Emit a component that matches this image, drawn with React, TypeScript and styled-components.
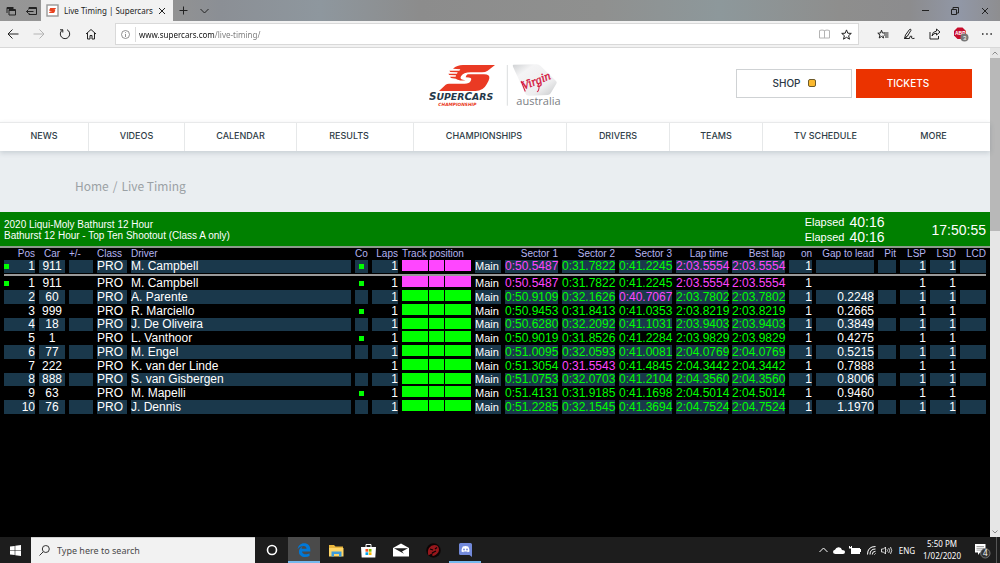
import React from "react";
import styled, { createGlobalStyle, css } from "styled-components";

const ui = `"Noto Sans", "Open Sans", sans-serif`;
const arial = `"Liberation Sans", Arial, sans-serif`;

const GlobalStyle = createGlobalStyle`
  * { box-sizing: border-box; }
  body { margin: 0; background: #000; font-family: ${ui}; }
  button { font: inherit; color: inherit; border: 0; padding: 0; background: none; }
  a { color: inherit; text-decoration: none; }
  svg { flex-shrink: 0; }
`;

const Screen = styled.div`
  display: flex;
  flex-direction: column;
  min-height: 100vh;
`;

/* ---------- browser chrome ---------- */

const TabStrip = styled.div`
  display: flex;
  align-items: stretch;
  height: 21px;
  color: #222;
  background: linear-gradient(90deg, #969696 0, #929292 17%, #8b8f95 22%, #8e979e 32%, #8c8c8c 42%, #8f908f 60%, #8d989b 72%, #8e8e8d 84%, #8c8c8e 91%, #9197a6 96%, #8e8e90 100%);
`;

const StripButton = styled.button<{ $w: number }>`
  display: flex;
  align-items: center;
  justify-content: center;
  width: ${(p) => p.$w}px;
`;

const Tab = styled.div`
  display: flex;
  align-items: center;
  width: 132px;
  padding: 0 6px 0 5px;
  background: #f2f2f2;
  font-size: 8px;
  white-space: nowrap;
`;

const TabTitle = styled.span`
  flex: 1;
  margin-left: 5px;
`;

const WindowButtons = styled.div`
  display: flex;
  margin-left: auto;
`;

const Toolbar = styled.div`
  display: flex;
  align-items: center;
  height: 27px;
  background: #f2f2f2;
  border-bottom: 1px solid #d8d8d8;
`;

const ToolButton = styled.button`
  position: relative;
  display: flex;
  align-items: center;
  justify-content: center;
  width: 26px;
  height: 24px;
  color: #222;

  &:disabled { color: #b4b4b4; }
`;

const AddressBar = styled.form`
  display: flex;
  align-items: center;
  flex: 1;
  height: 22px;
  margin: 0 11px;
  padding-right: 1px;
  background: #fff;
  border: 1px solid #d9d9d9;

  ${ToolButton} { width: 22px; }
`;

const InfoButton = styled.button`
  display: flex;
  justify-content: center;
  width: 20px;
  height: 15px;
  align-items: center;
  border-right: 1px solid #dcdcdc;
  color: #777;
`;

const AddressInput = styled.input`
  flex: 1;
  min-width: 0;
  height: 18px;
  margin-left: 3px;
  padding: 0;
  border: 0;
  outline: 0;
  font: 8px ${ui};
  color: transparent;
  background: linear-gradient(90deg, #111 76px, #777 76px);
  -webkit-background-clip: text;
  background-clip: text;
`;

/* ---------- page ---------- */

const Viewport = styled.div`
  display: flex;
  flex: 1;
`;

const Page = styled.div`
  display: flex;
  flex-direction: column;
  flex: 1;
  min-width: 0;
  background: #000;
`;

const Scrollbar = styled.div`
  display: flex;
  flex-direction: column;
  width: 10px;
  background: #e6e6e6;
  color: #8a8a8a;
`;

const ScrollArrow = styled.button`
  display: flex;
  align-items: center;
  justify-content: center;
  height: 10px;
`;

const ScrollThumb = styled.div`
  height: 173px;
  margin-bottom: auto;
  background: #b8b8b8;
`;

const SiteHeader = styled.header`
  display: grid;
  grid-template-columns: 1fr auto 1fr;
  align-items: center;
  height: 74px;
  padding: 0 18px;
  background: #fff;
`;

const LogoLink = styled.a`
  grid-column: 2;
  display: block;
  line-height: 0;
`;

const HeaderActions = styled.div`
  display: flex;
  justify-content: flex-end;
  gap: 4px;
  margin-bottom: 4px;
`;

const siteFont = `Inter, "Liberation Sans", sans-serif`;

const ActionLink = styled.a<{ $filled?: boolean }>`
  display: flex;
  align-items: center;
  justify-content: center;
  gap: 7px;
  width: 116px;
  height: 29px;
  padding-right: ${(p) => (p.$filled ? 12 : 0)}px;
  font: 500 10px ${siteFont};
  color: ${(p) => (p.$filled ? "#fff" : "#2b3945")};
  background: ${(p) => (p.$filled ? "#eb3300" : "#fff")};
  border: 1px solid ${(p) => (p.$filled ? "#eb3300" : "#cfd2d4")};
`;

const ShopBadge = styled.span`
  width: 8px;
  height: 8px;
  border: 1px solid #6d5a2a;
  border-radius: 2px;
  background: #fbb92f;
`;

const Nav = styled.nav`
  position: relative;
  display: grid;
  grid-template-columns: 89fr 96fr 112fr 117fr 153fr 103fr 93fr 126fr 101fr;
  height: 29px;
  background: #fff;
  border-top: 1px solid #e8e9ea;
  box-shadow: 0 2px 5px rgba(60, 80, 95, 0.2);
`;

const NavLink = styled.a<{ $menu?: boolean }>`
  display: flex;
  align-items: center;
  justify-content: center;
  padding-right: ${(p) => (p.$menu ? 12 : 0)}px;
  padding-bottom: 3px;
  font: 500 9px ${siteFont};
  color: #2f3d47;
  border-right: 1px solid #e6e8e9;

  &:last-child { border-right: 0; }
`;

const BreadcrumbBar = styled.div`
  display: flex;
  align-items: center;
  gap: 4px;
  height: 61px;
  padding: 7px 75px 0;
  background: #eaeef1;
  color: #9ba1a5;
  font: 12px "Noto Sans CJK SC", ${ui};
`;

/* ---------- timing screen ---------- */

const SessionBar = styled.section`
  display: flex;
  align-items: center;
  height: 36px;
  padding: 0 4px;
  color: #fff;
  background: #008000;
  border-bottom: 2px solid #8c9a8c;
  font-family: ${arial};
`;

const SessionTitle = styled.h1`
  flex: 1;
  margin: 0;
  padding-top: 2px;
  font-size: 10px;
  font-weight: 400;
  line-height: 11px;
`;

const Clocks = styled.dl`
  display: grid;
  grid-template-columns: auto auto;
  align-items: center;
  column-gap: 5px;
  margin: 0 47px 0 0;
  padding-top: 1px;
  line-height: 15px;

  dt { font-size: 11px; }
  dd { margin: 0; font-size: 14px; }
`;

const TimeOfDay = styled.time`
  padding-top: 1px;
  font-size: 14px;
`;

const TimingTable = styled.table`
  width: 100%;
  table-layout: fixed;
  border-collapse: separate;
  border-spacing: 4px 0;
  color: #fff;
  font: 12px/13px ${arial};
  white-space: nowrap;
`;

type Align = "left" | "right" | "center";

const HeadCell = styled.th<{ $align: Align }>`
  height: 12px;
  padding: 0;
  font-size: 10px;
  line-height: 12px;
  font-weight: 400;
  color: #b4b4f0;
  text-align: ${(p) => p.$align};
`;

const Cell = styled.td<{ $align: Align; $color?: string; $small?: boolean }>`
  padding: 0;
  text-align: ${(p) => p.$align};
  color: ${(p) => p.$color ?? "inherit"};
  ${(p) => p.$small && "font-size: 11px;"}
`;

const TrackCell = styled.td`
  padding: 0;
  vertical-align: top;
`;

const Row = styled.tr<{ $shaded?: boolean }>`
  height: 14px;
  ${(p) => p.$shaded && css`
    ${Cell} { background: #1a384b; }
  `}

  &:nth-child(4n) { height: 13px; }
`;

const LeaderRow = styled(Row)`
  height: 13px;
`;

const PosContent = styled.div`
  display: flex;
  align-items: center;
  justify-content: space-between;
`;

const Marker = styled.span`
  display: block;
  width: 5px;
  height: 5px;
  margin: 0 auto;
  background: #0f0;

  ${PosContent} & { margin: 0; }
`;

const PosNumber = styled.span`
  margin-left: auto;
`;

const Divider = styled.hr`
  margin: 1px 0 0;
  height: 2px;
  border: 0;
  background: #9a9a9a;
`;

const DividerCell = styled.td`
  padding: 0;
  line-height: 0;
`;

const Track = styled.div<{ $color: string }>`
  display: grid;
  grid-template-columns: 26fr 16fr 26fr;
  gap: 1px;
  height: 11px;

  i { background: ${(p) => p.$color}; }
`;

/* ---------- taskbar ---------- */

const Taskbar = styled.footer`
  display: flex;
  height: 26px;
  background: #1d1d1d;
  color: #fff;
`;

const TaskButton = styled.button<{ $w?: number; $active?: boolean; $running?: boolean }>`
  display: flex;
  align-items: center;
  justify-content: center;
  width: ${(p) => p.$w ?? 32}px;
  background: ${(p) => (p.$active ? "#4a4a4a" : "none")};
  box-shadow: ${(p) => (p.$running ? "inset 0 -2px #76b9ed" : "none")};
`;

const SearchBox = styled.label`
  display: flex;
  align-items: center;
  gap: 7px;
  width: 224px;
  padding-left: 8px;
  background: #f2f2f2;
  border-top: 1px solid #cfcfcf;
  color: #333;
`;

const SearchInput = styled.input`
  flex: 1;
  min-width: 0;
  padding: 0;
  border: 0;
  outline: 0;
  background: none;
  font: 9px ${ui};

  &::placeholder { color: #4a4a4a; opacity: 1; }
`;

const Tray = styled.div`
  display: flex;
  align-items: center;
  margin-left: auto;
  font-size: 8px;
`;

const TrayButton = styled.button`
  display: flex;
  align-items: center;
  justify-content: center;
  width: 16px;
  height: 26px;
`;

const Language = styled.button`
  width: 24px;
`;

const TrayClock = styled.time`
  width: 46px;
  margin-right: 6px;
  line-height: 12px;
  text-align: center;
`;

const NoticeButton = styled.button`
  display: flex;
  align-items: center;
  width: 26px;
  height: 26px;
  padding-left: 3px;
  margin-right: 3px;
  border-right: 1px solid #555;
`;

/* ---------- drawings ---------- */

const Line = ({ d, w = 12, h = 12, s = 1 }: { d: string; w?: number; h?: number; s?: number }) => (
  <svg width={w} height={h} viewBox={`0 0 ${w} ${h}`} fill="none" stroke="currentColor" strokeWidth={s} aria-hidden="true">
    <path d={d} />
  </svg>
);

const Favicon = () => (
  <svg width="13" height="13" viewBox="0 0 13 13" aria-hidden="true">
    <rect x="1" y="1" width="11" height="11" fill="#fff" stroke="#999" strokeWidth="1.4" />
    <path d="M4.2 4h6l-1.4 1.6H6.8l2.6.2-.8 2.4-1 .8H2.8l1.2-1.6h2.2L3 6.6z" fill="#e8421f" />
  </svg>
);

const SupercarsLogo = () => (
  <svg width="133" height="43" viewBox="0 0 399 129" role="img" aria-label="Supercars Championship, Virgin Australia">
    <defs>
      <linearGradient id="fin" x1="0" y1="0" x2="1" y2="1">
        <stop offset="0" stopColor="#cfd1d3" />
        <stop offset="0.25" stopColor="#f4f4f5" />
        <stop offset="0.7" stopColor="#eeeeef" />
        <stop offset="1" stopColor="#c6c8ca" />
      </linearGradient>
    </defs>
    <g fill="#ea3a24">
      <path d="M72 14Q84 3 102 3h96l-22 17q-7 5-17 5h-34q-22 0-29 12-3 5 0 8 4 3 14 4-22 2-29-5l-15-2-3-4h17l1-4-20-1-3-4h26l2-4-22-1-3-4h30l3-4z" />
      <path d="M116 31h49q18 0 16 12-1 7-8 18-10 20-34 20H30l20-19q4-3 10-3h47q14 0 18-8 4-7 0-9-4-2-15-2 1-6 6-9z" />
    </g>
    <text x="0" y="108" fontFamily="DejaVu Sans" fontWeight="700" fontStyle="italic" fontSize="31" fill="#24384a">
      S<tspan fontSize="28">UPER</tspan>C<tspan fontSize="28">ARS</tspan>
    </text>
    <text x="28" y="127" fontFamily="DejaVu Sans" fontWeight="700" fontStyle="italic" fontSize="13" fill="#ea3a24">CHAMPIONSHIP</text>
    <path d="M235 3v122" stroke="#c9cbcd" strokeWidth="2" />
    <path d="M253 2l70-1q7 0 12 5l46 45q4 4 1 8l-17 29q-3 5-9 5l-56 2q-9 0-12-8L252 8q-2-5 1-6z" fill="url(#fin)" />
    <g transform="rotate(-22 290 80)">
      <text x="285" y="76" fontFamily="Liberation Serif" fontStyle="italic" fontSize="37" fill="#d4143c" stroke="#d4143c" strokeWidth="1">Virgin</text>
      <path d="M288 48v34M334 74q-4 22-14 22" fill="none" stroke="#d4143c" strokeWidth="3" />
    </g>
    <text x="262" y="123" fontFamily="Open Sans" fontSize="33" fill="#7c8084">australia</text>
  </svg>
);

const Adblock = () => (
  <svg width="16" height="16" viewBox="0 0 16 16" aria-hidden="true">
    <path d="M4.5 1.5h5L13 5v4.500l-3.500 3.500h-5L1 9.500V5z" fill="#c70d2c" />
    <text x="2" y="9" fontFamily="Liberation Sans" fontWeight="700" fontSize="5" fill="#fff">ABP</text>
    <circle cx="11.500" cy="11.500" r="4" fill="#777" />
    <text x="10" y="14" fontFamily="Liberation Sans" fontSize="6" fill="#fff">3</text>
  </svg>
);

const WindowsMark = () => (
  <svg width="11" height="11" viewBox="0 0 11 11" fill="#fff" aria-hidden="true">
    <path d="M0 1.600l4.700-.7v4.300H0zM5.300.8L11 0v5.200H5.300zM0 5.800h4.700v4.300L0 9.400zM5.300 5.800H11V11l-5.700-.8z" />
  </svg>
);

const EdgeMark = () => (
  <svg width="14" height="14" viewBox="0 0 24 24" fill="#0078d7" aria-hidden="true">
    <path d="M1.200 10.600C1.800 5 6.200.6 12.200.6c6.500 0 10.600 4.600 10.600 10.700v3.100H8.600c.2 3.300 3 4.800 6.300 4.800 2.500 0 4.800-.7 6.500-1.800v4.800c-2 1-4.600 1.600-7.500 1.600-6.400 0-10.600-3.500-10.600-9 0-3.800 2.300-7.200 6.200-8.900-1 1.100-1.500 2.400-1.600 3.900h8.400c0-3-1.700-4.500-4.900-4.500-4.300 0-7.900 2-10.200 5.300z" />
  </svg>
);

const FolderMark = () => (
  <svg width="15" height="13" viewBox="0 0 15 13" aria-hidden="true">
    <path d="M0 1h5l1.500 1.500H14V12H0z" fill="#e9b63d" />
    <path d="M0 4h14.500v8.500H0z" fill="#ffd667" />
    <path d="M2.500 12.500V7.500h10v5h-2.500V10H5v2.500z" fill="#3e9bdc" />
  </svg>
);

const StoreMark = () => (
  <svg width="15" height="15" viewBox="0 0 15 15" aria-hidden="true">
    <path d="M5 4V1.500h5V4" fill="none" stroke="#fff" />
    <path d="M0 4h15l-.7 10.500H.7z" fill="#fff" />
    <path d="M4.500 6h2.700v2.700H4.500z" fill="#f25022" />
    <path d="M7.800 6h2.700v2.700H7.800z" fill="#7fba00" />
    <path d="M4.500 9.300h2.700V12H4.500z" fill="#00a4ef" />
    <path d="M7.800 9.300h2.700V12H7.800z" fill="#ffb900" />
  </svg>
);

const MailMark = () => (
  <svg width="16" height="14" viewBox="0 0 16 14" aria-hidden="true">
    <path d="M0 5l8-4.500L16 5v8.500H0z" fill="#fff" />
    <path d="M1 5.200h14L9 8.500l2 2.200z" fill="#1d1d1d" />
  </svg>
);

const GameMark = () => (
  <svg width="15" height="15" viewBox="0 0 15 15" aria-hidden="true">
    <circle cx="7.500" cy="7.500" r="7.200" fill="#0c0505" />
    <path d="M3 5q3-4 8-2.500Q14 5 12.500 9q-3 4-6 4-1-2 1-3-3 .5-5 2.500-1.500-4 .5-7.500z" fill="#97171c" />
    <path d="M4 6l3 1M9 6l2-1.500M6 10l4-2" stroke="#0c0505" strokeWidth="1.300" />
  </svg>
);

const DiscordMark = () => (
  <svg width="13" height="14" viewBox="0 0 13 14" aria-hidden="true">
    <path d="M1.500 0h10Q13 0 13 1.500V14l-2.500-2H1.500Q0 12 0 10.500v-9Q0 0 1.500 0z" fill="#7289da" />
    <path d="M2.500 8.500q0-3 1.300-5 2.700-1.200 5.400 0 1.300 2 1.300 5L8.800 9.300l-.6-.9H4.800l-.6.9z" fill="#fff" />
    <circle cx="5" cy="6.500" r=".9" fill="#7289da" />
    <circle cx="8" cy="6.500" r=".9" fill="#7289da" />
  </svg>
);

/* ---------- data ---------- */

const columns: { label: string; width?: number; align: Align }[] = [
  { label: "Pos", width: 31, align: "right" },
  { label: "Car", width: 26, align: "center" },
  { label: "+/-", width: 24, align: "left" },
  { label: "Class", width: 30, align: "left" },
  { label: "Driver", align: "left" },
  { label: "Co", width: 13, align: "center" },
  { label: "Laps", width: 26, align: "right" },
  { label: "Track position", width: 69, align: "left" },
  { label: "", width: 26, align: "left" },
  { label: "Sector 1", width: 53, align: "right" },
  { label: "Sector 2", width: 53, align: "right" },
  { label: "Sector 3", width: 53, align: "right" },
  { label: "Lap time", width: 52, align: "right" },
  { label: "Best lap", width: 53, align: "right" },
  { label: "on", width: 23, align: "right" },
  { label: "Gap to lead", width: 58, align: "right" },
  { label: "Pit", width: 18, align: "right" },
  { label: "LSP", width: 26, align: "right" },
  { label: "LSD", width: 26, align: "right" },
  { label: "LCD", width: 26, align: "right" },
];

type Entry = {
  pos: number;
  car: string;
  driver: string;
  co?: boolean;
  sectors: [string, string, string];
  lap: string;
  gap?: string;
  fastest?: number;
};

const entries: Entry[] = [
  { pos: 1, car: "911", driver: "M. Campbell", co: true, sectors: ["0:50.5487", "0:31.7822", "0:41.2245"], lap: "2:03.5554", fastest: 0 },
  { pos: 2, car: "60", driver: "A. Parente", sectors: ["0:50.9109", "0:32.1626", "0:40.7067"], lap: "2:03.7802", gap: "0.2248", fastest: 2 },
  { pos: 3, car: "999", driver: "R. Marciello", co: true, sectors: ["0:50.9453", "0:31.8413", "0:41.0353"], lap: "2:03.8219", gap: "0.2665" },
  { pos: 4, car: "18", driver: "J. De Oliveira", sectors: ["0:50.6280", "0:32.2092", "0:41.1031"], lap: "2:03.9403", gap: "0.3849" },
  { pos: 5, car: "1", driver: "L. Vanthoor", co: true, sectors: ["0:50.9019", "0:31.8526", "0:41.2284"], lap: "2:03.9829", gap: "0.4275" },
  { pos: 6, car: "77", driver: "M. Engel", sectors: ["0:51.0095", "0:32.0593", "0:41.0081"], lap: "2:04.0769", gap: "0.5215" },
  { pos: 7, car: "222", driver: "K. van der Linde", sectors: ["0:51.3054", "0:31.5543", "0:41.4845"], lap: "2:04.3442", gap: "0.7888", fastest: 1 },
  { pos: 8, car: "888", driver: "S. van Gisbergen", sectors: ["0:51.0753", "0:32.0703", "0:41.2104"], lap: "2:04.3560", gap: "0.8006" },
  { pos: 9, car: "63", driver: "M. Mapelli", co: true, sectors: ["0:51.4131", "0:31.9185", "0:41.1698"], lap: "2:04.5014", gap: "0.9460" },
  { pos: 10, car: "76", driver: "J. Dennis", sectors: ["0:51.2285", "0:32.1545", "0:41.3694"], lap: "2:04.7524", gap: "1.1970" },
];

const GREEN = "#00ff00";
const PINK = "#ff46ff";

const EntryCells = ({ entry }: { entry: Entry }) => {
  const lead = entry.pos === 1;
  const lapColor = lead ? PINK : GREEN;
  return (
    <>
      <Cell $align="right">
        <PosContent>{lead && <Marker />}<PosNumber>{entry.pos}</PosNumber></PosContent>
      </Cell>
      <Cell $align="center">{entry.car}</Cell>
      <Cell $align="left" />
      <Cell $align="left">PRO</Cell>
      <Cell $align="left">{entry.driver}</Cell>
      <Cell $align="center">{entry.co && <Marker />}</Cell>
      <Cell $align="right">1</Cell>
      <TrackCell><Track $color={lapColor}><i /><i /><i /></Track></TrackCell>
      <Cell $align="left" $small>Main</Cell>
      {entry.sectors.map((time, i) => (
        <Cell key={i} $align="right" $color={entry.fastest === i ? PINK : GREEN}>{time}</Cell>
      ))}
      <Cell $align="right" $color={lapColor}>{entry.lap}</Cell>
      <Cell $align="right" $color={lapColor}>{entry.lap}</Cell>
      <Cell $align="right">1</Cell>
      <Cell $align="right">{entry.gap}</Cell>
      <Cell $align="right" />
      <Cell $align="right">1</Cell>
      <Cell $align="right">1</Cell>
      <Cell $align="right" />
    </>
  );
};

const navItems: [string, boolean?][] = [
  ["NEWS"], ["VIDEOS"], ["CALENDAR"], ["RESULTS", true], ["CHAMPIONSHIPS", true],
  ["DRIVERS"], ["TEAMS"], ["TV SCHEDULE"], ["MORE", true],
];

export default function App() {
  return (
    <Screen>
      <GlobalStyle />
      <TabStrip>
        <StripButton $w={21} aria-label="Tabs set aside"><Line w={10} h={10} d="M1 7V1.500h6.500M1 2.500h6.500M3 3.500h6.500v5.500H3zM3 4.500h6.500" /></StripButton>
        <StripButton $w={20} aria-label="Set tabs aside"><Line w={11} h={10} d="M3 3V1.500h7.500v7H3V7M3 2.500h7.500M7.500 5.500H.5M2.500 3.500l-2 2 2 2" /></StripButton>
        <Tab>
          <Favicon />
          <TabTitle>Live Timing | Supercars</TabTitle>
          <StripButton $w={10} aria-label="Close tab"><Line w={8} h={8} d="M1 1l6 6M7 1l-6 6" /></StripButton>
        </Tab>
        <StripButton $w={21} aria-label="New tab"><Line w={9} h={9} d="M4.500.5v8M.5 4.500h8" /></StripButton>
        <StripButton $w={20} aria-label="Show tab previews"><Line w={9} h={6} d="M.5 1l4 4 4-4" /></StripButton>
        <WindowButtons>
          <StripButton $w={30} aria-label="Minimise"><Line w={7} h={7} d="M0 3.500h7" /></StripButton>
          <StripButton $w={30} aria-label="Restore"><Line w={8} h={8} d="M.5 2.500h5v5h-5zM2 2.500V.5h5.500V6H6" /></StripButton>
          <StripButton $w={30} aria-label="Close"><Line w={8} h={8} d="M1 1l6 6M7 1l-6 6" /></StripButton>
        </WindowButtons>
      </TabStrip>

      <Toolbar>
        <ToolButton aria-label="Back"><Line d="M11.500 6H1.500M5.500 1.500L1 6l4.500 4.500" /></ToolButton>
        <ToolButton aria-label="Forward" disabled><Line d="M.5 6h10M6.500 1.500L11 6l-4.500 4.500" /></ToolButton>
        <ToolButton aria-label="Refresh"><Line d="M8 1.700A4.700 4.700 0 1 1 3.800 1.800M3.800 1.800H1M3.800 1.800V4.500" /></ToolButton>
        <ToolButton aria-label="Home"><Line d="M1 6l5-4.500L11 6M2.500 5v6H5V7.500h2V11h2.500V5" /></ToolButton>
        <AddressBar>
          <InfoButton type="button" aria-label="Site information">
            <svg width="9" height="9" viewBox="0 0 9 9" fill="none" stroke="currentColor" strokeWidth=".8"><circle cx="4.500" cy="4.500" r="4" /><path d="M4.500 4v3M4.500 2.200v.9" /></svg>
          </InfoButton>
          <AddressInput aria-label="Address" defaultValue="www.supercars.com/live-timing/" />
          <ToolButton type="button" aria-label="Reading view" disabled><Line w={11} h={10} d="M.5 1.500q2.500-1 5 0 2.500-1 5 0v7.500H.5zM5.500 1.500V9" /></ToolButton>
          <ToolButton type="button" aria-label="Add to favourites"><Line w={11} h={11} d="M5.500.9l1.300 3.300 3.500.2-2.700 2.300.9 3.500-3-1.900-3 1.900.9-3.500L.7 4.400l3.500-.2z" /></ToolButton>
        </AddressBar>
        <ToolButton aria-label="Favourites"><Line w={12} h={11} d="M8 4L5.500 4 4.500 1.200 3.500 4 .8 4.200 3 6l-.8 3L4.500 7.500 6.500 9 6 6.500M7.500 4h4M7 6h4.500M8 8h3.500" /></ToolButton>
        <ToolButton aria-label="Add notes"><Line d="M1.500 10.500L2.500 7 6.500 1.500q1.500-1 1.500.8L4.500 8zM4.500 8l-3 2.500h5q0-2.500 1.500-2.500t.5 2q1 1 3 .3" /></ToolButton>
        <ToolButton aria-label="Share"><Line d="M1 4v7h8.500V8M7.500 1l3.500 3-3.500 3V5.200Q4.500 5 3 8q.3-4.500 4.500-5z" /></ToolButton>
        <ToolButton aria-label="Adblock Plus"><Adblock /></ToolButton>
        <ToolButton aria-label="Settings and more"><Line w={12} h={4} s={1.5} d="M1 2h1.500M5.200 2h1.500M9.400 2h1.500" /></ToolButton>
      </Toolbar>

      <Viewport>
        <Page>
          <SiteHeader>
            <LogoLink href="#"><SupercarsLogo /></LogoLink>
            <HeaderActions>
              <ActionLink href="#">SHOP <ShopBadge /></ActionLink>
              <ActionLink href="#" $filled>TICKETS</ActionLink>
            </HeaderActions>
          </SiteHeader>
          <Nav>
            {navItems.map(([label, menu]) => (
              <NavLink key={label} href="#" $menu={menu}>{label}</NavLink>
            ))}
          </Nav>
          <BreadcrumbBar>
            <a href="#">Home</a>
            <span>/</span>
            <span>Live Timing</span>
          </BreadcrumbBar>

          <SessionBar>
            <SessionTitle>2020 Liqui-Moly Bathurst 12 Hour<br />Bathurst 12 Hour - Top Ten Shootout (Class A only)</SessionTitle>
            <Clocks>
              <dt>Elapsed</dt><dd>40:16</dd>
              <dt>Elapsed</dt><dd>40:16</dd>
            </Clocks>
            <TimeOfDay>17:50:55</TimeOfDay>
          </SessionBar>
          <TimingTable>
            <colgroup>
              {columns.map((c, i) => <col key={i} width={c.width} />)}
            </colgroup>
            <thead>
              <tr>{columns.map((c, i) => <HeadCell key={i} $align={c.align}>{c.label}</HeadCell>)}</tr>
            </thead>
            <tbody>
              <LeaderRow $shaded><EntryCells entry={entries[0]} /></LeaderRow>
              <tr><DividerCell colSpan={columns.length}><Divider /></DividerCell></tr>
            </tbody>
            <tbody>
              {entries.map((entry) => (
                <Row key={entry.pos} $shaded={entry.pos % 2 === 0}><EntryCells entry={entry} /></Row>
              ))}
            </tbody>
          </TimingTable>
        </Page>
        <Scrollbar>
          <ScrollArrow aria-label="Scroll up"><Line w={6} h={4} d="M.5 3.500L3 1l2.500 2.500" /></ScrollArrow>
          <ScrollThumb />
          <ScrollArrow aria-label="Scroll down"><Line w={6} h={4} d="M.5.5L3 3 5.500.5" /></ScrollArrow>
        </Scrollbar>
      </Viewport>

      <Taskbar>
        <TaskButton $w={31} aria-label="Start"><WindowsMark /></TaskButton>
        <SearchBox>
          <Line w={11} h={11} d="M4 7L.5 10.500M3.300 4a3.500 3.500 0 1 1 7 0 3.500 3.500 0 0 1-7 0z" />
          <SearchInput type="search" placeholder="Type here to search" aria-label="Type here to search" />
        </SearchBox>
        <TaskButton $w={33} aria-label="Cortana"><svg width="12" height="12" viewBox="0 0 12 12" fill="none" stroke="#fff" strokeWidth="1.600"><circle cx="6" cy="6" r="4.500" /></svg></TaskButton>
        <TaskButton $active $running aria-label="Edge"><EdgeMark /></TaskButton>
        <TaskButton aria-label="File Explorer"><FolderMark /></TaskButton>
        <TaskButton aria-label="Store"><StoreMark /></TaskButton>
        <TaskButton $w={33} aria-label="Mail"><MailMark /></TaskButton>
        <TaskButton aria-label="Game"><GameMark /></TaskButton>
        <TaskButton $running aria-label="Discord"><DiscordMark /></TaskButton>
        <Tray>
          <TrayButton aria-label="Hidden icons"><Line w={9} h={6} d="M.5 5l4-4 4 4" /></TrayButton>
          <TrayButton aria-label="OneDrive"><svg width="12" height="7" viewBox="0 0 12 7" fill="#fff"><path d="M2.500 7Q0 7 0 5t2-2.200Q3 0 5.800.2 8.500.5 9 3q3 0 3 2t-2 2z" /></svg></TrayButton>
          <TrayButton aria-label="Battery"><svg width="12" height="8" viewBox="0 0 12 8" fill="#fff"><path d="M2 2h9v1h1v3h-1v2H2zM0 0h1v1h1V0h1v2.500H0z" /></svg></TrayButton>
          <TrayButton aria-label="Network"><Line w={9} h={9} d="M.5 8.500q0-8 8-8M3 8.500Q3 3 8.500 3M5.300 8.500q0-3.200 3.200-3.200M7.500 8.500l1-1" /></TrayButton>
          <TrayButton aria-label="Volume"><Line w={12} h={9} s={0.8} d="M.5 3v3h2l2 2V1l-2 2zM6 3.300q1 1.200 0 2.400M7.700 2q1.800 2.500 0 5M9.500 1q2.500 3.500 0 7" /></TrayButton>
          <Language>ENG</Language>
          <TrayClock>5:50 PM<br />1/02/2020</TrayClock>
          <NoticeButton aria-label="Notifications, 4 new">
            <svg width="17" height="17" viewBox="0 0 17 17"><path d="M1 2h10.500v8.500H6L4 13v-2.500H1z" fill="#fff" /><path d="M2.500 4.500h7.500M2.500 6.300h7.500M2.500 8.100h7.500" stroke="#777" strokeWidth=".7" /><circle cx="11.300" cy="11.300" r="4.700" fill="#333" stroke="#888" strokeWidth=".8" /><text x="9" y="14" fontFamily="Noto Sans" fontSize="8" fill="#fff">4</text></svg>
          </NoticeButton>
        </Tray>
      </Taskbar>
    </Screen>
  );
}
